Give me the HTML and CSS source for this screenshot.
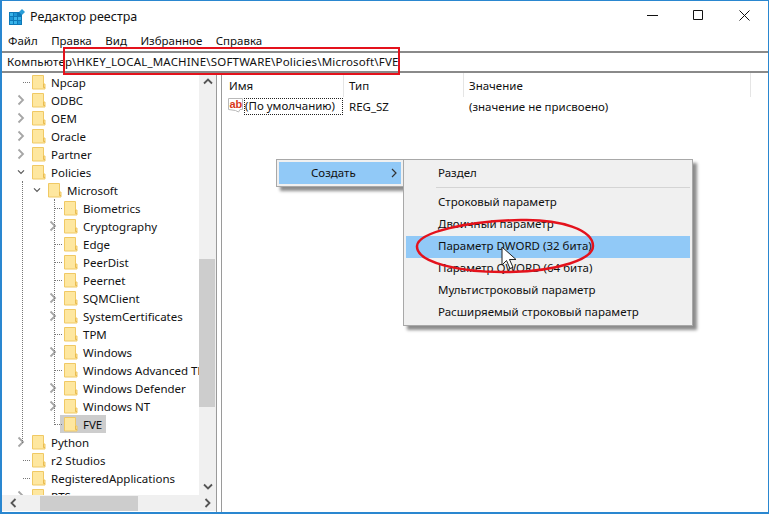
FILE: index.html
```html
<!DOCTYPE html>
<html lang="ru">
<head>
<meta charset="utf-8">
<title>Редактор реестра</title>
<link rel="stylesheet" href="styles.css">
</head>
<body>
<svg class="defs" width="0" height="0" aria-hidden="true">
  <symbol id="folder" viewBox="0 0 14 16">
    <path d="M.5 1.500h11v8.500h1.500v5H.5z" fill="#fee79f" stroke="#f0c964"/>
    <path d="M11.500 10v3.500h1.500" fill="#f6d275" stroke="#e9bb50"/>
  </symbol>
  <symbol id="right" viewBox="0 0 8 12"><path d="M1.500 1.500 6 6l-4.500 4.500" fill="none" stroke="#a6a6a6" stroke-width="1.800"/></symbol>
  <symbol id="down" viewBox="0 0 12 8"><path d="M1.500 1.500 6 6l4.500-4.500" fill="none" stroke="#595959" stroke-width="1.800"/></symbol>
</svg>
<div class="window">
  <header class="titlebar">
    <svg class="appicon" width="16" height="16" viewBox="0 0 16 16">
      <path d="M0 3h13v13H0z" fill="#0e79b8"/>
      <path d="M1 4h3v3H1zM5 8h3v3H5zM9 8h3v3H9zM1 12h3v3H1zM5 12h3v3H5z" fill="#39b4ea"/>
      <path d="M5 4h3v3H5zM1 8h3v3H1zM9 12h3v3H9z" fill="#1d97d8"/>
      <path d="M13 0l3 3-3 3-3-3z" fill="#2a9ed8"/>
    </svg>
    <span class="title">Редактор реестра</span>
    <div class="controls">
      <svg width="11" height="11" viewBox="0 0 11 11"><path d="M0 5.500h11" stroke="#111"/></svg>
      <svg width="11" height="11" viewBox="0 0 11 11"><path d="M.5.500h9v9h-9z" fill="none" stroke="#111"/></svg>
      <svg width="11" height="11" viewBox="0 0 11 11"><path d="M.5.500l10 10M10.500.500l-10 10" stroke="#111"/></svg>
    </div>
  </header>
  <nav class="menubar">
    <span>Файл</span><span>Правка</span><span>Вид</span><span>Избранное</span><span>Справка</span>
  </nav>
  <div class="address">Компьютер\HKEY_LOCAL_MACHINE\SOFTWARE\Policies\Microsoft\FVE</div>
  <main class="panes">
    <section class="treepane">
      <div class="treemain">
        <div class="tree">
          <div class="row l1"><i class="exp leaf"></i><svg class="fld"><use href="#folder"/></svg><span>Npcap</span></div>
          <div class="row l1"><svg class="exp"><use href="#right"/></svg><svg class="fld"><use href="#folder"/></svg><span>ODBC</span></div>
          <div class="row l1"><svg class="exp"><use href="#right"/></svg><svg class="fld"><use href="#folder"/></svg><span>OEM</span></div>
          <div class="row l1"><svg class="exp"><use href="#right"/></svg><svg class="fld"><use href="#folder"/></svg><span>Oracle</span></div>
          <div class="row l1"><svg class="exp"><use href="#right"/></svg><svg class="fld"><use href="#folder"/></svg><span>Partner</span></div>
          <div class="row l1"><svg class="exp"><use href="#down"/></svg><svg class="fld"><use href="#folder"/></svg><span>Policies</span></div>
          <div class="row l2"><svg class="exp"><use href="#down"/></svg><svg class="fld"><use href="#folder"/></svg><span>Microsoft</span></div>
          <div class="row l3"><i class="exp leaf"></i><svg class="fld"><use href="#folder"/></svg><span>Biometrics</span></div>
          <div class="row l3"><svg class="exp"><use href="#right"/></svg><svg class="fld"><use href="#folder"/></svg><span>Cryptography</span></div>
          <div class="row l3"><i class="exp leaf"></i><svg class="fld"><use href="#folder"/></svg><span>Edge</span></div>
          <div class="row l3"><i class="exp leaf"></i><svg class="fld"><use href="#folder"/></svg><span>PeerDist</span></div>
          <div class="row l3"><i class="exp leaf"></i><svg class="fld"><use href="#folder"/></svg><span>Peernet</span></div>
          <div class="row l3"><svg class="exp"><use href="#right"/></svg><svg class="fld"><use href="#folder"/></svg><span>SQMClient</span></div>
          <div class="row l3"><svg class="exp"><use href="#right"/></svg><svg class="fld"><use href="#folder"/></svg><span>SystemCertificates</span></div>
          <div class="row l3"><i class="exp leaf"></i><svg class="fld"><use href="#folder"/></svg><span>TPM</span></div>
          <div class="row l3"><svg class="exp"><use href="#right"/></svg><svg class="fld"><use href="#folder"/></svg><span>Windows</span></div>
          <div class="row l3"><i class="exp leaf"></i><svg class="fld"><use href="#folder"/></svg><span>Windows Advanced Threat Protection</span></div>
          <div class="row l3"><svg class="exp"><use href="#right"/></svg><svg class="fld"><use href="#folder"/></svg><span>Windows Defender</span></div>
          <div class="row l3"><svg class="exp"><use href="#right"/></svg><svg class="fld"><use href="#folder"/></svg><span>Windows NT</span></div>
          <div class="row l3 sel"><i class="exp leaf"></i><svg class="fld"><use href="#folder"/></svg><span>FVE</span></div>
          <div class="row l1"><svg class="exp"><use href="#right"/></svg><svg class="fld"><use href="#folder"/></svg><span>Python</span></div>
          <div class="row l1"><i class="exp leaf"></i><svg class="fld"><use href="#folder"/></svg><span>r2 Studios</span></div>
          <div class="row l1"><i class="exp leaf"></i><svg class="fld"><use href="#folder"/></svg><span>RegisteredApplications</span></div>
          <div class="row l1"><svg class="exp"><use href="#right"/></svg><svg class="fld"><use href="#folder"/></svg><span>RTS</span></div>
          <i class="vguide g1"></i><i class="vguide g2"></i>
        </div>
        <div class="vscroll">
          <svg width="10" height="7" viewBox="0 0 10 7"><path d="M1 5.500l4-4 4 4" fill="none" stroke="#555" stroke-width="1.800"/></svg>
          <div class="vtrack"><div class="vthumb"></div></div>
          <svg width="10" height="7" viewBox="0 0 10 7"><path d="M1 1.500l4 4 4-4" fill="none" stroke="#555" stroke-width="1.800"/></svg>
        </div>
      </div>
      <div class="hscroll">
        <svg width="7" height="10" viewBox="0 0 7 10"><path d="M5.500 1l-4 4 4 4" fill="none" stroke="#555" stroke-width="1.800"/></svg>
        <div class="htrack"><div class="hthumb"></div></div>
        <svg width="7" height="10" viewBox="0 0 7 10"><path d="M1.500 1l4 4-4 4" fill="none" stroke="#555" stroke-width="1.800"/></svg>
      </div>
    </section>
    <section class="listpane">
      <div class="listhead"><span class="c1">Имя</span><span class="c2">Тип</span><span class="c3">Значение</span></div>
      <div class="listrow">
        <svg class="abicon" width="16" height="16" viewBox="0 0 16 16">
          <path d="M.5.500h14v11h-2.500l-1.500 2.500-3-1.500-7-1z" fill="#fff" stroke="#b9b9b9"/>
        </svg>
        <span class="abtext">ab</span>
        <span class="c1 focus">(По умолчанию)</span><span class="c2">REG_SZ</span><span class="c3">(значение не присвоено)</span>
      </div>
    </section>
  </main>

  <div class="menu create">
    <div class="item hot"><span>Создать</span><svg width="6" height="10" viewBox="0 0 6 10"><path d="M1 1l4 4-4 4" fill="none" stroke="#333" stroke-width="1.200"/></svg></div>
  </div>
  <div class="menu sub">
    <div class="item">Раздел</div>
    <div class="sep"></div>
    <div class="item">Строковый параметр</div>
    <div class="item">Двоичный параметр</div>
    <div class="item hot">Параметр DWORD (32 бита)</div>
    <div class="item">Параметр QWORD (64 бита)</div>
    <div class="item">Мультистроковый параметр</div>
    <div class="item">Расширяемый строковый параметр</div>
  </div>
  <div class="redbox"></div>
  <svg class="ellipse" width="184" height="60" viewBox="0 0 184 60">
    <path d="M4 30C5 16 55 5 108 4c40-1 72 10 72 26 0 13-34 25-83 26C46 57 3 46 4 30z" fill="none" stroke="#e4121c" stroke-width="2.500"/>
  </svg>
  <svg class="cursor" width="16" height="24" viewBox="0 0 16 24">
    <path d="M1 1v18l4.500-4.500 3.500 8 3-1.200-3.500-7.800H15z" fill="#fff" stroke="#222"/>
  </svg>
</div>
</body>
</html>
```
FILE: styles.css
```css
* { box-sizing: border-box; }
html, body { margin: 0; padding: 0; background: #fff; }
body { width: 769px; height: 514px; overflow: hidden; font: 11.500px/18px "Noto Sans", "Open Sans", sans-serif; color: #111; }
.defs { position: absolute; }
.window { position: relative; width: 769px; height: 514px; display: flex; flex-direction: column; border: 1px solid #2a87d0; border-width: 1px 1px 2px 2px; background: #fff; overflow: hidden; }

.titlebar { height: 29px; display: flex; align-items: center; padding-left: 7px; padding-top: 2px; flex: none; }
.appicon { flex: none; }
.title { margin-left: 5px; font-size: 12.500px; }
.controls { margin-left: auto; display: flex; gap: 35px; padding-right: 18px; margin-top: -2px; }

.menubar { height: 21px; display: flex; align-items: center; flex: none; padding-left: 6px; }
.menubar span { margin-right: 13.500px; }
.address { height: 22px; flex: none; border: 1px solid #8a8a8a; border-width: 2px 0 2px 0; padding-left: 5px; line-height: 18px; letter-spacing: .18px; white-space: nowrap; background: #fff; }

.panes { flex: 1; display: flex; min-height: 0; }
.treepane { width: 215px; flex: none; display: flex; flex-direction: column; border-right: 1px solid #9a9a9a; padding-bottom: 1px; }
.treemain { flex: 1; display: flex; min-height: 0; }
.tree { position: relative; width: 197px; overflow: hidden; flex: none; }
.row { height: 18px; display: flex; align-items: center; white-space: nowrap; position: relative; }
.row span { margin-left: 5px; padding-top: 1px; }
.l1 { padding-left: 15px; }
.l2 { padding-left: 31px; }
.l3 { padding-left: 47px; }
.exp { width: 8px; height: 12px; margin-right: 7px; flex: none; }
.leaf { border-bottom: 1px dotted #777; height: 10px; margin-top: -9px; width: 7px; margin-left: 6px; margin-right: 2px; }
.fld { width: 14px; height: 16px; flex: none; }
.l3.sel { background: linear-gradient(#cdcdcd, #cdcdcd) no-repeat 58px 0 / 46px 18px; }
.vguide { position: absolute; border-left: 1px dotted #777; }
.g1 { left: 20px; top: 108px; height: 262px; }
.g2 { left: 52px; top: 126px; height: 226px; }

.vscroll { width: 17px; flex: none; background: #f0f0f0; display: flex; flex-direction: column; align-items: center; padding: 5px 0; }
.vtrack { flex: 1; width: 100%; padding-top: 174px; }
.vthumb { height: 148px; background: #cdcdcd; width: 16px; }
.hscroll { height: 16px; flex: none; background: #f0f0f0; display: flex; align-items: center; padding: 0 5px 0 8px; }
.htrack { flex: 1; height: 15px; padding-left: 23px; }
.hthumb { width: 98px; height: 15px; background: #cdcdcd; }

.listpane { flex: 1; margin-left: 4px; border-left: 1px solid #9a9a9a; position: relative; }
.listhead { display: flex; align-items: center; height: 24px; padding-top: 1px; background: linear-gradient(#e5e5e5, #e5e5e5) no-repeat 121px 0 / 1px 24px, linear-gradient(#e5e5e5, #e5e5e5) no-repeat 241px 0 / 1px 24px, linear-gradient(#e5e5e5, #e5e5e5) no-repeat 528px 0 / 1px 24px; }
.listrow { display: flex; align-items: center; height: 17px; margin-top: 1px; position: relative; }
.c1 { margin-left: 7px; width: 120px; }
.c2 { width: 120px; }
.listrow .abicon { position: absolute; left: 6px; top: 0; }
.abtext { position: absolute; left: 7.500px; top: 1px; color: #d8391b; font: bold 11px/11px "Liberation Sans", sans-serif; }
.listrow .c1 { margin-left: 22px; width: 99px; height: 17px; line-height: 16px; outline: 1px dotted #222; outline-offset: -1px; padding-left: 1px; margin-right: 6px; white-space: nowrap; }

.menu { position: absolute; background: #f0f0f0; border: 1px solid #a8a8a8; box-shadow: 4px 4px 3px rgba(0,0,0,.45); padding: 2px; }
.create { left: 274px; top: 158px; width: 128px; height: 28px; }
.create .item { padding: 0 4px 0 32px; justify-content: space-between; display: flex; align-items: center; }
.sub { left: 401px; top: 158px; width: 290px; height: 167px; padding-top: 3px; }
.item { height: 22px; line-height: 20px; padding-left: 32px; white-space: nowrap; }
.hot { background: #91c9f7; }
.sep { height: 1px; background: #d4d4d4; margin: 2px 0 4px 30px; }

.redbox { position: absolute; left: 61px; top: 46px; width: 337px; height: 28px; border: 2.500px solid #e4121c; }
.ellipse { position: absolute; left: 411px; top: 215px; }
.cursor { position: absolute; left: 499px; top: 245px; }
```
